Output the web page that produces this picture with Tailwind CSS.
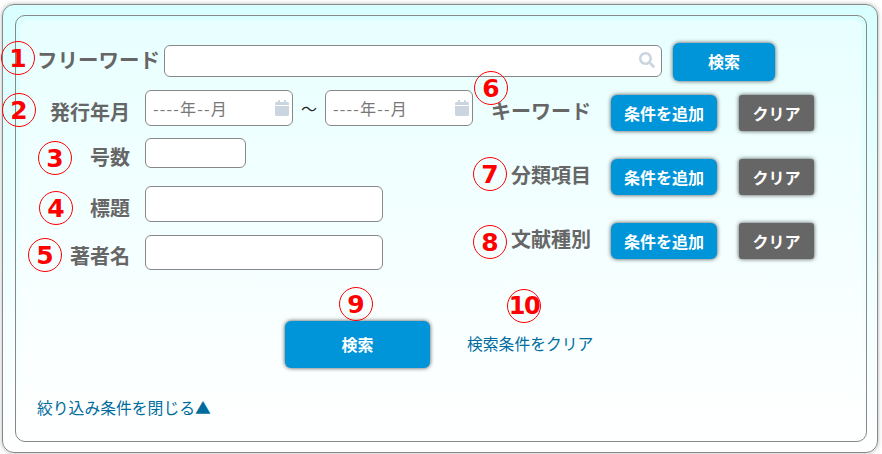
<!DOCTYPE html>
<html lang="ja">
<head>
    <meta charset="UTF-8">
    <title>絞り込み条件</title>
    <script src="https://cdn.jsdelivr.net/npm/@tailwindcss/browser@4"></script>
</head>
<body class="bg-white font-['Noto_Sans_CJK_JP','Noto_Sans',sans-serif] overflow-hidden">
<div class="relative w-[882px] h-[454px] overflow-hidden">
    <!-- outer panel -->
    <div class="ml-[2px] mt-[4px] w-[876px] h-[449px] border border-[#888] rounded-[12px] bg-linear-to-b from-[#d8ffff] to-white pt-[10px] pl-[12px] shadow-[0_0_4px_rgba(0,0,0,0.3)]">
        <div class="w-[852px] h-[427px] border border-[#888] rounded-[10px] p-[4px]">
            <div class="h-full rounded-[8px] bg-linear-to-b from-[#e8ffff] to-white pt-[23px] pl-[17px]">

                <!-- free word -->
                <div class="flex items-center h-[38px]">
                    <span class="w-[127px] pb-[5px] text-[20.500px] leading-none font-bold text-[#666] whitespace-nowrap">フリーワード</span>
                    <div class="relative w-[498px] h-[32px] mb-[2px] bg-white border border-[#888] rounded-[6px]">
                        <svg class="absolute right-[6px] top-[6px] w-[16px] h-[16px]" viewBox="0 0 512 512" fill="#cbd5e0"><path d="M505 442.700L405.300 343c-4.500-4.500-10.600-7-17-7H372c27.600-35.300 44-79.700 44-128C416 93.100 322.900 0 208 0S0 93.100 0 208s93.100 208 208 208c48.300 0 92.700-16.400 128-44v16.300c0 6.400 2.500 12.500 7 17l99.700 99.700c9.400 9.400 24.600 9.400 33.900 0l28.300-28.300c9.400-9.400 9.400-24.600.1-34zM208 336c-70.700 0-128-57.200-128-128 0-70.700 57.200-128 128-128 70.700 0 128 57.200 128 128 0 70.700-57.200 128-128 128z"/></svg>
                    </div>
                    <button class="ml-[11px] w-[102px] h-[38px] pb-[2px] rounded-[6px] bg-[#0095d9] text-white text-[16px] font-bold shadow-[0_0_4px_rgba(0,0,0,0.7)]">検索</button>
                </div>

                <div class="flex mt-[9px]">
                    <!-- left column -->
                    <div class="w-[436px]">
                        <div class="flex items-center h-[36px]">
                            <span class="w-[93px] pt-[7px] text-right text-[20px] leading-none font-bold text-[#666] whitespace-nowrap">発行年月</span>
                            <div class="ml-[15px] flex items-center justify-between w-[148px] h-[36px] bg-white border border-[#888] rounded-[6px] pl-[7px] pr-[3px] text-[16px] tracking-[1.200px] text-[#777]">
                                <span>----年--月</span>
                                <svg class="w-[14px] h-[16px]" viewBox="0 0 448 512" fill="#cbd5e0"><path d="M0 464c0 26.500 21.500 48 48 48h352c26.500 0 48-21.500 48-48V192H0v272zM400 64h-48V16c0-8.800-7.200-16-16-16h-32c-8.800 0-16 7.200-16 16v48H160V16c0-8.800-7.200-16-16-16h-32c-8.800 0-16 7.200-16 16v48H48C21.500 64 0 85.500 0 112v48h448v-48c0-26.500-21.500-48-48-48z"/></svg>
                            </div>
                            <span class="w-[32px] text-center text-[16px] text-[#222]">～</span>
                            <div class="flex items-center justify-between w-[148px] h-[36px] bg-white border border-[#888] rounded-[6px] pl-[7px] pr-[3px] text-[16px] tracking-[1.200px] text-[#777]">
                                <span>----年--月</span>
                                <svg class="w-[14px] h-[16px]" viewBox="0 0 448 512" fill="#cbd5e0"><path d="M0 464c0 26.500 21.500 48 48 48h352c26.500 0 48-21.500 48-48V192H0v272zM400 64h-48V16c0-8.800-7.200-16-16-16h-32c-8.800 0-16 7.200-16 16v48H160V16c0-8.800-7.200-16-16-16h-32c-8.800 0-16 7.200-16 16v48H48C21.500 64 0 85.500 0 112v48h448v-48c0-26.500-21.500-48-48-48z"/></svg>
                            </div>
                        </div>
                        <div class="flex items-center h-[30px] mt-[12px]">
                            <span class="w-[93px] pt-[8px] text-right text-[20px] leading-none font-bold text-[#666]">号数</span>
                            <div class="ml-[15px] w-[101px] h-[30px] bg-white border border-[#888] rounded-[6px]"></div>
                        </div>
                        <div class="flex items-center h-[36px] mt-[18px]">
                            <span class="w-[93px] pt-[8px] text-right text-[20px] leading-none font-bold text-[#666]">標題</span>
                            <div class="ml-[15px] w-[238px] h-[36px] bg-white border border-[#888] rounded-[6px]"></div>
                        </div>
                        <div class="flex items-center h-[35px] mt-[13px]">
                            <span class="w-[93px] pt-[6px] text-right text-[20px] leading-none font-bold text-[#666]">著者名</span>
                            <div class="ml-[15px] w-[238px] h-[35px] bg-white border border-[#888] rounded-[6px]"></div>
                        </div>
                    </div>

                    <!-- right column -->
                    <div class="pt-[5px] flex flex-col gap-[28px]">
                        <div class="flex items-center h-[36px]">
                            <span class="w-[118px] pb-[5px] text-right text-[20px] leading-none font-bold text-[#666] whitespace-nowrap">キーワード</span>
                            <button class="ml-[20px] w-[106px] h-[36px] pb-[1px] rounded-[6px] bg-[#0095d9] text-white text-[16px] font-bold shadow-[0_0_4px_rgba(0,0,0,0.7)]">条件を追加</button>
                            <button class="ml-[22px] w-[75px] h-[36px] pb-[1px] rounded-[3px] bg-[#666] text-white text-[16px] font-bold shadow-[0_0_4px_rgba(0,0,0,0.7)]">クリア</button>
                        </div>
                        <div class="flex items-center h-[36px]">
                            <span class="w-[118px] pb-[5px] text-right text-[20px] leading-none font-bold text-[#666]">分類項目</span>
                            <button class="ml-[20px] w-[106px] h-[36px] pb-[1px] rounded-[6px] bg-[#0095d9] text-white text-[16px] font-bold shadow-[0_0_4px_rgba(0,0,0,0.7)]">条件を追加</button>
                            <button class="ml-[22px] w-[75px] h-[36px] pb-[1px] rounded-[3px] bg-[#666] text-white text-[16px] font-bold shadow-[0_0_4px_rgba(0,0,0,0.7)]">クリア</button>
                        </div>
                        <div class="flex items-center h-[36px]">
                            <span class="w-[118px] pb-[5px] text-right text-[20px] leading-none font-bold text-[#666]">文献種別</span>
                            <button class="ml-[20px] w-[106px] h-[36px] pb-[1px] rounded-[6px] bg-[#0095d9] text-white text-[16px] font-bold shadow-[0_0_4px_rgba(0,0,0,0.7)]">条件を追加</button>
                            <button class="ml-[22px] w-[75px] h-[36px] pb-[1px] rounded-[3px] bg-[#666] text-white text-[16px] font-bold shadow-[0_0_4px_rgba(0,0,0,0.7)]">クリア</button>
                        </div>
                    </div>
                </div>

                <!-- main actions -->
                <div class="flex items-center mt-[51px] pl-[248px]">
                    <button class="w-[145px] h-[47px] pb-[2px] rounded-[6px] bg-[#0095d9] text-white text-[16px] font-bold shadow-[0_0_4px_rgba(0,0,0,0.7)]">検索</button>
                    <a class="ml-[37px] pb-[2px] text-[15.800px] leading-[24px] text-[#006c9e] whitespace-nowrap">検索条件をクリア</a>
                </div>

                <a class="block mt-[28px] text-[15.800px] leading-[24px] text-[#006c9e] whitespace-nowrap">絞り込み条件を閉じる▲</a>
            </div>
        </div>
    </div>

    <!-- numbered annotations -->
    <span class="absolute left-[1px] top-[41px] w-[34px] h-[34px] flex items-center justify-center rounded-full border border-[#f00] text-[#f00] font-['DejaVu_Sans',sans-serif] text-[25px] leading-none font-bold">1</span>
    <span class="absolute left-[2px] top-[93px] w-[34px] h-[34px] flex items-center justify-center rounded-full border border-[#f00] text-[#f00] font-['DejaVu_Sans',sans-serif] text-[25px] leading-none font-bold">2</span>
    <span class="absolute left-[38px] top-[141px] w-[34px] h-[34px] flex items-center justify-center rounded-full border border-[#f00] text-[#f00] font-['DejaVu_Sans',sans-serif] text-[25px] leading-none font-bold">3</span>
    <span class="absolute left-[39px] top-[191px] w-[34px] h-[34px] flex items-center justify-center rounded-full border border-[#f00] text-[#f00] font-['DejaVu_Sans',sans-serif] text-[25px] leading-none font-bold">4</span>
    <span class="absolute left-[28px] top-[238px] w-[34px] h-[34px] flex items-center justify-center rounded-full border border-[#f00] text-[#f00] font-['DejaVu_Sans',sans-serif] text-[25px] leading-none font-bold">5</span>
    <span class="absolute left-[474px] top-[71px] w-[34px] h-[34px] flex items-center justify-center rounded-full border border-[#f00] text-[#f00] font-['DejaVu_Sans',sans-serif] text-[25px] leading-none font-bold">6</span>
    <span class="absolute left-[473px] top-[157px] w-[34px] h-[34px] flex items-center justify-center rounded-full border border-[#f00] text-[#f00] font-['DejaVu_Sans',sans-serif] text-[25px] leading-none font-bold">7</span>
    <span class="absolute left-[473px] top-[225px] w-[34px] h-[34px] flex items-center justify-center rounded-full border border-[#f00] text-[#f00] font-['DejaVu_Sans',sans-serif] text-[25px] leading-none font-bold">8</span>
    <span class="absolute left-[339px] top-[287px] w-[34px] h-[34px] flex items-center justify-center rounded-full border border-[#f00] text-[#f00] font-['DejaVu_Sans',sans-serif] text-[25px] leading-none font-bold">9</span>
    <span class="absolute left-[507px] top-[289px] w-[34px] h-[34px] flex items-center justify-center rounded-full border border-[#f00] text-[#f00] font-['DejaVu_Sans',sans-serif] text-[24px] leading-none font-bold tracking-[-1.500px]">10</span>
</div>
</body>
</html>
